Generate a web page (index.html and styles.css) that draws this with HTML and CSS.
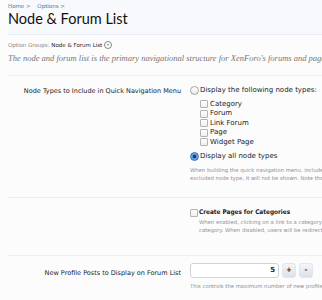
FILE: index.html
```html
<!DOCTYPE html>
<html lang="en">
  <head>
    <meta charset="UTF-8" />
    <title>Node &amp; Forum List</title>
    <link rel="stylesheet" href="styles.css">
  </head>
  <body>
    <div class="page">
      <div class="titleBar">
        <div class="crumbs">
          <a href="#">Home</a> <span class="arrow">&gt;</span>
          <a href="#">Options</a> <span class="arrow">&gt;</span>
        </div>
        <h1>Node &amp; Forum List</h1>
      </div>

      <div class="groups">
        Option Groups: <b>Node &amp; Forum List</b> <span class="menuArrow">&#9662;</span>
      </div>
      <p class="description">The node and forum list is the primary navigational structure for XenForo's forums and pages.</p>

      <div class="ctrlUnit first">
        <div class="label">Node Types to Include in Quick Navigation Menu</div>
        <div class="field">
          <label class="choice"><span class="radio"></span>Display the following node types:</label>
          <ul class="sublist">
            <li><span class="check"></span>Category</li>
            <li><span class="check"></span>Forum</li>
            <li><span class="check"></span>Link Forum</li>
            <li><span class="check"></span>Page</li>
            <li><span class="check"></span>Widget Page</li>
          </ul>
          <label class="choice"><span class="radio on"></span>Display all node types</label>
          <p class="hint">When building the quick navigation menu, include only the node types you select. If a node is an<br>excluded node type, it will not be shown. Note that the children of excluded nodes will still be shown.</p>
        </div>
      </div>

      <div class="ctrlUnit second">
        <div class="label"></div>
        <div class="field">
          <label class="choice bold"><span class="check"></span>Create Pages for Categories</label>
          <p class="hint indent">When enabled, clicking on a link to a category will take users to a page listing that<br>category. When disabled, users will be redirected to the forum list.</p>
        </div>
      </div>

      <div class="ctrlUnit third">
        <div class="label">New Profile Posts to Display on Forum List</div>
        <div class="field">
          <div class="spin">
            <span class="input">5</span>
            <span class="btn">+</span>
            <span class="btn">-</span>
          </div>
          <p class="hint">This controls the maximum number of new profile posts shown on the forum list.</p>
        </div>
      </div>
    </div>
  </body>
</html>
```

FILE: styles.css
```css
* {
  margin: 0;
  padding: 0;
}

body {
  background-color: #fcfcfd;
  font-family: "DejaVu Sans", Verdana, sans-serif;
  color: #222222;
  overflow: hidden;
}

.page {
  width: 640px;
  padding-left: 8px;
}

.titleBar {
  background-color: #f8f9fc;
  border-bottom: 1px solid #e9eef4;
  height: 34px;
}

.crumbs {
  padding-top: 3px;
  font-size: 5.5px;
  color: #6a8aac;
}

.crumbs a {
  color: #4a76a0;
  text-decoration: none;
}

.crumbs .arrow {
  margin-right: 5px;
}

h1 {
  font-family: Lato, "Open Sans", sans-serif;
  font-weight: normal;
  font-size: 14.5px;
  line-height: 18px;
  color: #111111;
  margin-top: 1px;
}

.groups {
  margin-top: 5px;
  font-size: 5.5px;
  color: #888888;
  line-height: 10px;
}

.groups b {
  color: #222222;
  font-weight: normal;
}

.menuArrow {
  display: inline-block;
  width: 6px;
  height: 6px;
  border: 1px solid #888888;
  border-radius: 50%;
  font-size: 4px;
  line-height: 6px;
  text-align: center;
  vertical-align: middle;
}

.description {
  font-family: "Liberation Serif", serif;
  font-style: italic;
  font-size: 8.5px;
  color: #777777;
  line-height: 12px;
  margin-top: 2px;
  padding-bottom: 11px;
  border-bottom: 1px solid #eaeef3;
}

.ctrlUnit {
  display: flex;
  border-bottom: 1px solid #eaeef3;
}

.ctrlUnit.first {
  padding-top: 10px;
  height: 111px;
}

.ctrlUnit.second {
  padding-top: 10px;
  height: 47px;
}

.ctrlUnit.third {
  border-bottom: none;
  padding-top: 7px;
}

.label {
  width: 173px;
  text-align: right;
  font-size: 6.5px;
  line-height: 9px;
  padding-right: 9px;
  padding-top: 1px;
  flex-shrink: 0;
}

.third .label {
  padding-top: 6px;
}

.field {
  font-size: 7px;
  line-height: 9.5px;
}

.choice {
  display: flex;
  align-items: center;
  gap: 1px;
}

.bold {
  font-family: "DejaVu Sans Condensed", "DejaVu Sans", sans-serif;
  font-weight: bold;
  font-size: 6.4px;
  color: #1a1a1a;
}

.radio {
  display: inline-block;
  width: 7px;
  height: 7px;
  border: 1px solid #a4a4a4;
  border-radius: 50%;
  background: linear-gradient(#ffffff, #e6e6e6);
}

.radio.on {
  border-color: #3b6fb0;
  background: radial-gradient(circle, #1f3f70 0 1.5px, #5a94d8 2px, #8ab8ec 100%);
}

.sublist {
  list-style: none;
  padding-left: 10px;
  margin-top: 4px;
  margin-bottom: 5px;
}

.sublist li {
  display: flex;
  align-items: center;
  gap: 2px;
  height: 9.5px;
}

.check {
  display: inline-block;
  width: 6px;
  height: 6px;
  border: 1px solid #b4b4b4;
  border-radius: 1px;
  background: linear-gradient(#ffffff, #eeeeee);
}

.hint {
  font-size: 5.3px;
  line-height: 8px;
  color: #8f8f8f;
  margin-top: 4px;
  white-space: nowrap;
}

.hint.indent {
  padding-left: 9px;
  margin-top: 0;
}

.spin {
  display: flex;
  align-items: center;
  gap: 3px;
}

.input {
  width: 84px;
  height: 13px;
  border: 1px solid #cfd4da;
  border-radius: 3px;
  background-color: #ffffff;
  text-align: right;
  font-size: 7px;
  line-height: 13px;
  padding-right: 3px;
  font-weight: bold;
}

.btn {
  width: 12px;
  height: 13px;
  border-radius: 3px;
  background: linear-gradient(#f3f5f8, #dde2e8);
  border: 1px solid #e2e6eb;
  text-align: center;
  font-size: 7px;
  font-weight: bold;
  line-height: 13px;
}
```
